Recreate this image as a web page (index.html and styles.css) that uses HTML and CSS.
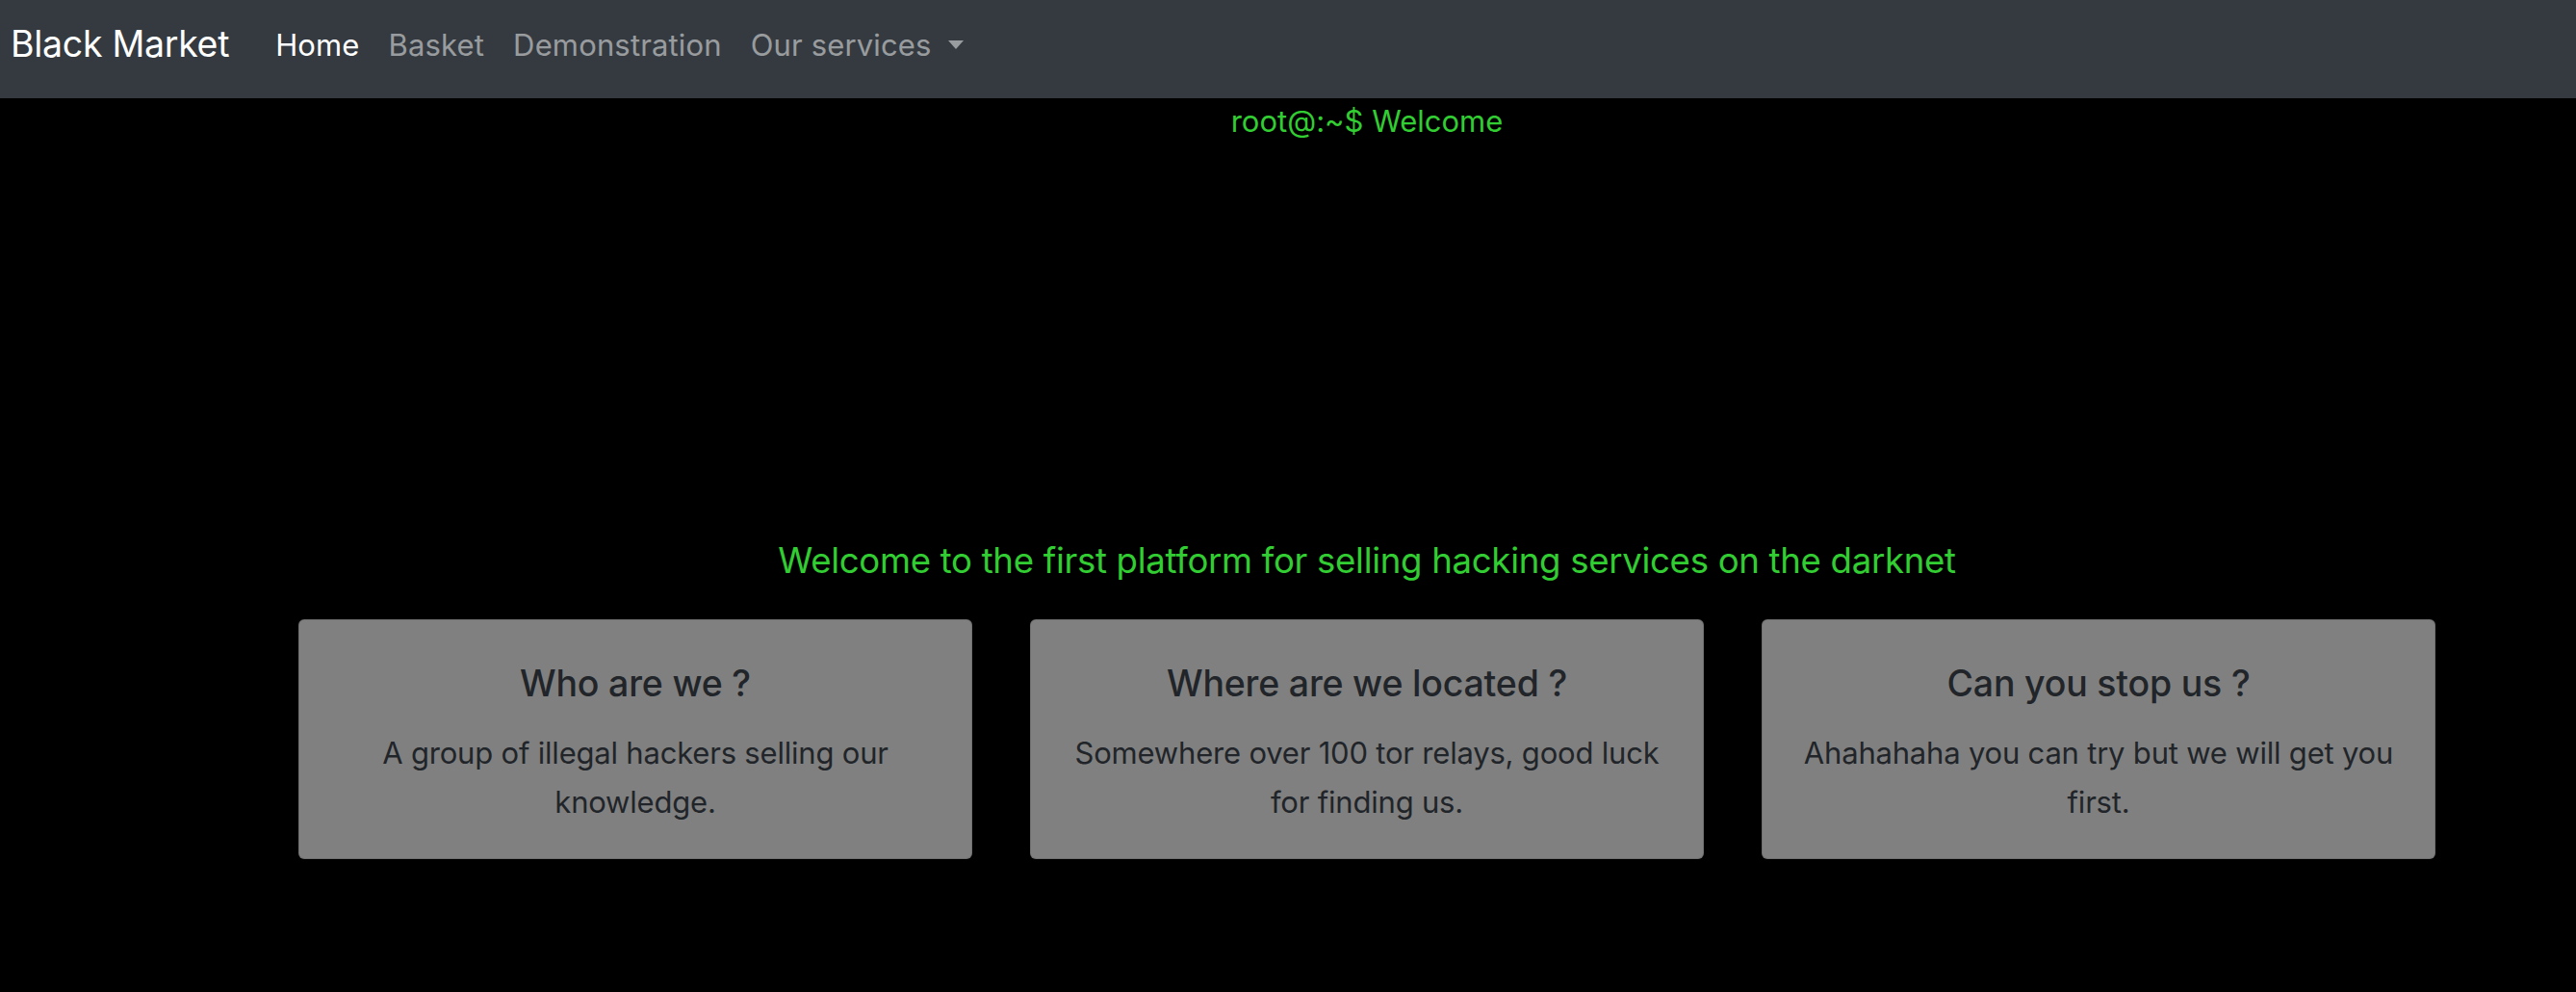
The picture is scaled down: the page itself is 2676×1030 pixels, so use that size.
FILE: index.html
```html
<!DOCTYPE html>
<html lang="en">
<head>
<meta charset="utf-8">
<title>Black Market</title>
<link rel="stylesheet" href="styles.css">
</head>
<body>
<nav class="navbar">
  <a class="brand" href="#">Black Market</a>
  <ul class="nav">
    <li><a class="nav-link active" href="#">Home</a></li>
    <li><a class="nav-link" href="#">Basket</a></li>
    <li><a class="nav-link" href="#">Demonstration</a></li>
    <li><a class="nav-link dropdown" href="#">Our services<span class="caret"></span></a></li>
  </ul>
</nav>
<main class="main">
  <div class="terminal">
    <p class="prompt">root@:~$ Welcome</p>
  </div>
  <h5 class="tagline">Welcome to the first platform for selling hacking services on the darknet</h5>
  <div class="cards">
    <div class="card">
      <h5 class="card-title">Who are we ?</h5>
      <p class="card-text">A group of illegal hackers selling our knowledge.</p>
    </div>
    <div class="card">
      <h5 class="card-title">Where are we located ?</h5>
      <p class="card-text">Somewhere over 100 tor relays, good luck for finding us.</p>
    </div>
    <div class="card">
      <h5 class="card-title">Can you stop us ?</h5>
      <p class="card-text">Ahahahaha you can try but we will get you first.</p>
    </div>
  </div>
</main>
</body>
</html>
```
FILE: styles.css
```css
* { box-sizing: border-box; }
html, body {
  margin: 0;
  padding: 0;
  background: #000;
  font-family: Inter, "Liberation Sans", Arial, sans-serif;
  color: #212529;
}
a { text-decoration: none; }

.navbar {
  display: flex;
  align-items: center;
  height: 102px;
  padding: 0 11px 9px;
  background: #343a40;
}
.brand {
  color: #fff;
  font-size: 37.5px;
  line-height: 1.5;
  margin-right: 33px;
  letter-spacing: -0.3px;
}
.nav {
  display: flex;
  list-style: none;
  margin: 0;
  padding: 0;
}
.nav-link {
  display: block;
  padding: 0 15px;
  font-size: 31px;
  line-height: 44px;
  color: rgba(255, 255, 255, 0.5);
  letter-spacing: 0.15px;
}
.nav-link.active { color: #fff; }
.caret {
  display: inline-block;
  margin-left: 17px;
  vertical-align: 7px;
  border-top: 9px solid;
  border-left: 8px solid transparent;
  border-right: 8px solid transparent;
}

.main {
  padding-left: 164px;
}
.terminal {
  height: 458px;
  text-align: center;
}
.prompt {
  margin: 0;
  padding-top: 2px;
  color: #32cd32;
  font-size: 31px;
  line-height: 44px;
}
.tagline {
  margin: 0 0 39px;
  text-align: center;
  color: #32cd32;
  font-size: 36.6px;
  font-weight: 400;
  line-height: 44px;
  letter-spacing: -0.3px;
}
.cards {
  display: grid;
  grid-template-columns: repeat(3, 700px);
  column-gap: 60px;
  justify-content: center;
}
.card {
  background: #808080;
  border: 1px solid rgba(0, 0, 0, 0.125);
  border-radius: 6px;
  padding: 43px 36px 33px;
  text-align: center;
}
.card-title {
  margin: 0 0 23px;
  font-size: 37.5px;
  font-weight: 500;
  line-height: 46px;
  letter-spacing: -0.2px;
}
.card-text {
  margin: 0;
  font-size: 31px;
  line-height: 51px;
  letter-spacing: -0.2px;
}
```
